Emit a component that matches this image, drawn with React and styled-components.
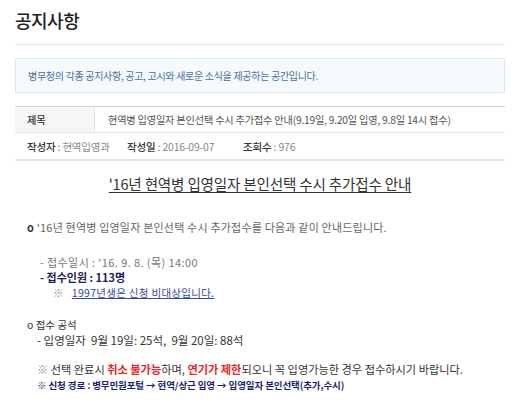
import React from "react";
import styled, { createGlobalStyle } from "styled-components";

const Global = createGlobalStyle`
  html, body { margin: 0; padding: 0; background: #fff; }
  body { font-family: "Noto Sans CJK KR", "Noto Sans", sans-serif; color: #555; }
  * { box-sizing: border-box; }
`;

const Page = styled.div`
  width: 520px;
  height: 408px;
  overflow: hidden;
  padding: 0 15px;
`;

const Title = styled.h1`
  margin: 0;
  padding-top: 7px;
  height: 45px;
  font-size: 18px;
  font-weight: 500;
  color: #222;
  letter-spacing: -0.5px;
  line-height: 26px;
  border-bottom: 1px solid #e6e6e6;
`;

const InfoBox = styled.div`
  margin-top: 13px;
  height: 35px;
  display: flex;
  align-items: center;
  padding: 0 12px;
  background: #f5fafd;
  border: 1px solid #dbe6ee;
  font-size: 10px;
  letter-spacing: -0.3px;
  color: #4a6f9e;
`;

const MetaTable = styled.div`
  margin-top: 13px;
  border-top: 1px solid #d4d4d4;
  border-bottom: 2px solid #e3e3e3;
`;

const Row = styled.div`
  display: flex;
  align-items: center;
  height: ${(p) => p.$h}px;
  padding-left: ${(p) => p.$pl || 0}px;
  border-bottom: ${(p) => (p.$line ? "1px solid #e3e3e3" : "none")};
  font-size: ${(p) => p.$fs || 10}px;
  letter-spacing: -0.2px;
`;

const Label = styled.div`
  width: 80px;
  height: 100%;
  display: flex;
  align-items: center;
  padding-left: 12px;
  background: #f6f6f6;
  border-right: 1px solid #e3e3e3;
  color: #333;
  font-weight: 500;
`;

const Value = styled.div`
  padding-left: 13px;
  color: #555;
`;

const MetaItem = styled.span`
  width: ${(p) => (p.$w ? `${p.$w}px` : "auto")};
  flex-shrink: 0;
  color: #888;
  b { color: #333; font-weight: 500; }
`;

const Body = styled.div`
  padding-top: 13px;
`;

const Heading = styled.h2`
  margin: 0;
  text-align: center;
  font-size: 14.6px;
  font-weight: 400;
  color: #333;
  letter-spacing: -0.2px;
  line-height: 20px;
  text-decoration: underline;
  text-underline-offset: 2px;
  text-decoration-thickness: 1px;
`;

const Para = styled.p`
  margin: ${(p) => p.$mt || 0}px 0 0 ${(p) => p.$ml || 0}px;
  font-size: ${(p) => p.$fs || 10}px;
  line-height: ${(p) => p.$lh || 15}px;
  letter-spacing: ${(p) => p.$ls ?? 0}px;
  color: ${(p) => p.$color || "#666"};
  font-weight: ${(p) => (p.$bold ? 700 : 400)};
`;

const Bullet = styled.b`
  color: #333;
  font-weight: 700;
`;

const Mark = styled.span`
  color: #999;
`;

const Link = styled.a`
  color: #3446a8;
  text-decoration: underline;
  margin-left: 8px;
`;

const Red = styled.b`
  color: #e8242a;
  font-weight: 700;
`;

export default function App() {
  return (
    <>
      <Global />
      <Page>
        <Title>공지사항</Title>
        <InfoBox>병무청의 각종 공지사항, 공고, 고시와 새로운 소식을 제공하는 공간입니다.</InfoBox>
        <MetaTable>
          <Row $h={26} $line $fs={10.2}>
            <Label>제목</Label>
            <Value>현역병 입영일자 본인선택 수시 추가접수 안내(9.19일, 9.20일 입영, 9.8일 14시 접수)</Value>
          </Row>
          <Row $h={26} $fs={10.5} $pl={12}>
            <MetaItem $w={100}><b>작성자</b> : 현역입영과</MetaItem>
            <MetaItem $w={116}><b>작성일</b> : 2016-09-07</MetaItem>
            <MetaItem><b>조회수</b> : 976</MetaItem>
          </Row>
        </MetaTable>
        <Body>
          <Heading>'16년 현역병 입영일자 본인선택 수시 추가접수 안내</Heading>
          <Para $mt={26} $ml={12} $fs={11} $color="#666" $ls={0.2}>
            <Bullet>o</Bullet> '16년 현역병 입영일자 본인선택 수시 추가접수를 다음과 같이 안내드립니다.
          </Para>
          <Para $mt={20} $ml={25} $fs={11} $ls={0.4} $color="#777">- 접수일시 : '16. 9. 8. (목) 14:00</Para>
          <Para $ml={25} $color="#1d1f52" $bold $fs={11}>- 접수인원 : 113명</Para>
          <Para $ml={38} $fs={10.5} $ls={0.3} $color="#888">※<Link>1997년생은 신청 비대상입니다.</Link></Para>
          <Para $mt={17} $ml={12} $color="#333" $fs={10.5}>o 접수 공석</Para>
          <Para $ml={22} $color="#333" $fs={11.5} $lh={17}>- 입영일자 &nbsp;9월 19일: 25석, &nbsp;9월 20일: 88석</Para>
          <Para $mt={12} $ml={22} $color="#333" $fs={11.2} $lh={16} $ls={0}>
            <Mark>※</Mark> 선택 완료시 <Red>취소 불가능</Red>하며, <Red>연기가 제한</Red>되오니 꼭 입영가능한 경우 접수하시기 바랍니다.
          </Para>
          <Para $ml={22} $color="#1d1f6e" $fs={9.5} $lh={16} $ls={-0.1} $bold>
            ※ 신청 경로 : 병무민원포털 → 현역/상근 입영 → 입영일자 본인선택(추가,수시)
          </Para>
        </Body>
      </Page>
    </>
  );
}
